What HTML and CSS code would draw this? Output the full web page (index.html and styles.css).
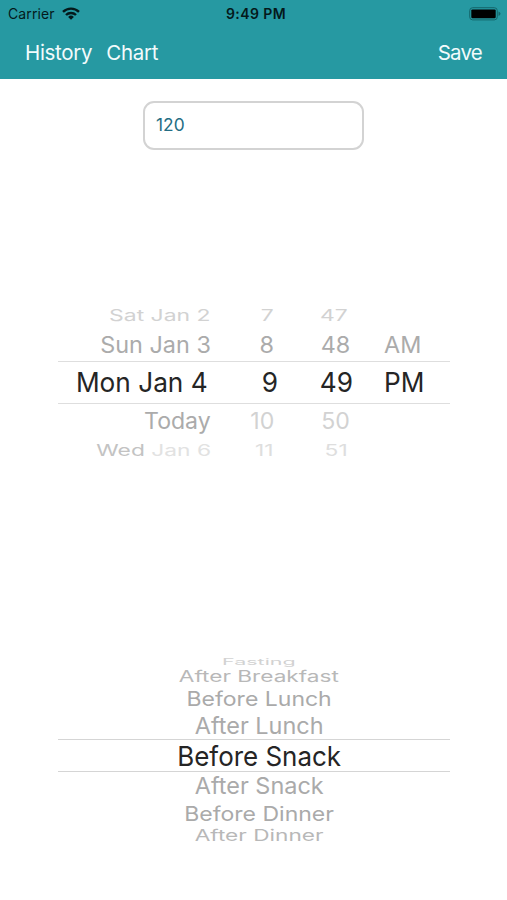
FILE: index.html
```html
<!DOCTYPE html>
<html lang="en">
<head>
<meta charset="utf-8">
<title>Glucose entry</title>
<link rel="stylesheet" href="styles.css">
</head>
<body>
<header class="header">
  <div class="status">
    <div class="carrier"><span>Carrier</span>
      <svg class="wifi" viewBox="0 0 18 13"><g fill="none" stroke="#04191b" stroke-width="2.4"><path d="M1 4.9a11.4 11.4 0 0 1 16 0"/><path d="M4 8a7.1 7.1 0 0 1 10 0"/></g><path fill="#04191b" d="M6.1 9.9a4.2 4.2 0 0 1 5.8 0L9 12.8z"/></svg>
    </div>
    <div class="clock">9:49 PM</div>
    <svg class="battery" viewBox="0 0 32 14"><rect x=".7" y=".7" width="27.6" height="12.2" rx="3" fill="none" stroke="#14666b"/><rect x="2.3" y="2.4" width="24.4" height="8.8" rx="1.2"/><path fill="#14666b" d="M29.5 4.6q2 .7 2 2.2t-2 2.2z"/></svg>
  </div>
  <nav class="nav"><a class="history">History</a><a class="chart">Chart</a><a class="save">Save</a></nav>
</header>
<main>
  <div class="field"><span>120</span></div>
  <section class="picker date">
    <div class="row far first"><span>Sat Jan 2</span><span>7</span><span>47</span></div>
    <div class="row near"><span>Sun Jan 3</span><span>8</span><span>48</span><span class="ap">AM</span></div>
    <div class="row selected"><span>Mon Jan 4</span><span>9</span><span>49</span><span class="ap">PM</span></div>
    <div class="row near below"><span>Today</span><span>10</span><span>50</span></div>
    <div class="row far last"><span class="wed">Wed <i>Jan 6</i></span><span>11</span><span>51</span></div>
  </section>
  <section class="picker meal">
    <div class="m1"><span>Fasting</span></div>
    <div class="m2"><span>After Breakfast</span></div>
    <div class="m3"><span>Before Lunch</span></div>
    <div class="m4"><span>After Lunch</span></div>
    <div class="m5"><span>Before Snack</span></div>
    <div class="m6"><span>After Snack</span></div>
    <div class="m7"><span>Before Dinner</span></div>
    <div class="m8"><span>After Dinner</span></div>
  </section>
</main>
</body>
</html>
```
FILE: styles.css
```css
* { box-sizing: border-box; }
body { margin: 0; width: 507px; height: 900px; overflow: hidden; background: #fff; font-family: Inter, "Liberation Sans", sans-serif; }
span { display: inline-block; white-space: nowrap; }
.header { height: 79px; background: #2699a2; }
.status { display: grid; grid-template-columns: 1fr auto 1fr; align-items: center; height: 27px; padding: 0 6px 0 8px; color: #04191b; font-size: 14px; }
.carrier { display: flex; align-items: center; gap: 7px; letter-spacing: .1px; }
.wifi { width: 18px; height: 13px; }
.clock { font-weight: 600; font-size: 14px; letter-spacing: .4px; transform: translateX(1.5px); }
.battery { width: 32px; height: 14px; justify-self: end; }
.nav { display: flex; align-items: center; height: 50px; padding: 0 25px; color: #f2fbfc; font-size: 20.5px; letter-spacing: -.3px; }
.chart { margin-left: 14px; }
.save { margin-left: auto; letter-spacing: -.8px; }
.field { display: flex; align-items: center; width: 221px; height: 49px; margin: 22px 0 0 143px; padding: 0 0 2px 11px; border: 2px solid #d3d3d3; border-radius: 11px; color: #246d84; font-size: 17px; }
.field span { transform: scaleX(1.02); transform-origin: left center; }
.picker { width: 392px; margin-left: 58px; }
.date { margin-top: 150px; }
.row { display: grid; grid-template-columns: 153px 63px 76px 34px 66px; align-items: center; text-align: right; }
.row span { transform-origin: right center; justify-self: end; }
.row .ap { grid-column: 5; justify-self: start; transform-origin: left center; }
.far { grid-template-columns: 153px 63px 74px 36px 66px; height: 29px; font-size: 15.5px; color: #d2d2d2; }
.far span { transform: scaleX(1.47); }
.first span { transform: translateY(1px) scaleX(1.48); }
.near { height: 32px; font-size: 22.4px; color: #ababab; }
.near span { transform: translateY(-1px) scaleX(1.045); }
.near.below span { transform: scaleX(1.03); }
.selected { grid-template-columns: 150px 70px 75px 31px 66px; height: 43px; border: solid #dedede; border-width: 1px 0; font-size: 27.6px; color: #252525; }
.selected span { transform: translateY(-1px) scaleX(.95); }
.below span + span { color: #d2d2d2; }
.last span + span { color: #dedede; }
.last .wed { color: #c3c3c3; }
.last i { font-style: normal; color: #e2e2e2; }
.meal { margin-top: 192px; color: #aaa; }
.meal div { display: flex; align-items: center; justify-content: center; padding-left: 10px; }
.meal .m1 { height: 9px; font-size: 8.7px; color: #d2d2d2; }
.m1 span { transform: scaleX(2.47); }
.m2 { height: 20px; font-size: 15.5px; color: #b8b8b8; }
.m2 span, .m8 span { transform: scaleX(1.46); }
.m3 { height: 25px; font-size: 20px; }
.m3 span, .m7 span { transform: scaleX(1.15); }
.m4 { height: 28px; font-size: 23px; }
.m4 span { transform: translateY(.5px) scaleX(1.02); }
.m6 span { transform: translateY(-.6px) scaleX(1.02); }
.meal .m5 { height: 33px; font-size: 27.6px; color: #252525; border: solid #d5d5d5; border-width: 1px 0; }
.m5 span { transform: scaleX(.94); }
.m6 { height: 29px; font-size: 23px; }
.m7 { height: 25px; font-size: 20px; }
.m8 { height: 18px; font-size: 15.5px; color: #b8b8b8; }
```
